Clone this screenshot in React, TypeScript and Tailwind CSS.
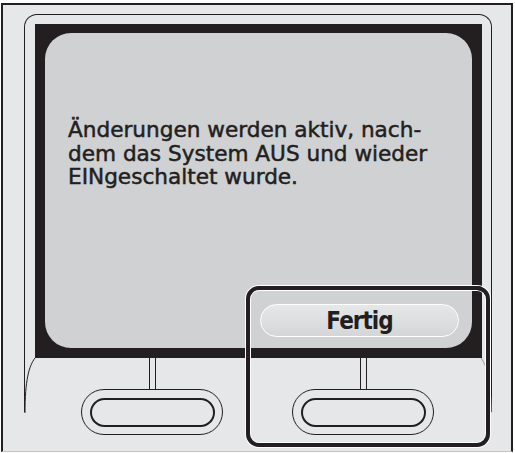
import React from "react";

const ink = "#231f20";

function HardButton() {
  return (
    <div className="flex flex-col items-center w-[142px]">
      <div className="w-[7px] h-[31px] border-x border-[#231f20] bg-[#e6e7e8]" />
      <div className="w-[142px] h-[46px] rounded-full border border-[#231f20] bg-[#e6e7e8] flex items-center justify-center">
        <div className="w-[125px] h-[29px] rounded-full border-2 border-[#231f20]" />
      </div>
    </div>
  );
}

export default function App() {
  return (
    <div
      className="relative w-[515px] h-[453px] bg-white overflow-hidden"
      style={{ fontFamily: '"DejaVu Sans", sans-serif' }}
    >
      {/* device housing */}
      <div className="mt-[3px] ml-[1px] w-[512px] h-[449px] border-x-2 border-t-2 border-b border-t-[#231f20] border-x-[#231f20] border-b-[#c4c5c6] bg-[#e6e7e8]">
        {/* bezel */}
        <div className="relative mt-[9px] ml-[21px] w-[468px] h-[398px] border-x border-t border-[#231f20] rounded-t-[13px]">
          {/* screen frame */}
          <div className="mt-[9px] ml-[10px] w-[447px] h-[334px] bg-[#231f20] pt-[9px] pb-[10px] px-[10px]">
            <div className="h-full rounded-[26px] bg-[#cfd1d3] flex flex-col">
              <p className="pt-[85px] pl-[23px] text-[21.6px] leading-[23.5px] text-[#231f20] [-webkit-text-stroke:0.5px_#231f20] whitespace-nowrap">
                Änderungen werden aktiv, nach-
                <br />
                dem das System AUS und wieder
                <br />
                EINgeschaltet wurde.
              </p>
              <button
                className="mt-auto self-end mr-[13px] mb-[11px] w-[199px] h-[33px] rounded-full border-[1.5px] border-white bg-gradient-to-b from-[#e6e7e8] to-[#d5d6d8] text-[24px] tracking-[-1px] font-bold text-[#231f20] leading-none flex items-center justify-center"
                style={{ fontFamily: '"DejaVu Sans Condensed", "DejaVu Sans", sans-serif' }}
              >
                Fertig
              </button>
            </div>
          </div>

          {/* hardware keys */}
          <div className="flex gap-[69px] ml-[56px]">
            <HardButton />
            <HardButton />
          </div>

          {/* bezel side curves */}
          <svg className="absolute left-[-1px] top-[343px]" width="14" height="56" viewBox="0 0 14 56">
            <path d="M11 0 C5 8 1 22 1 55" fill="none" stroke={ink} strokeWidth="1" />
          </svg>
          <svg className="absolute right-[-1px] top-[343px]" width="14" height="56" viewBox="0 0 14 56">
            <path d="M3 0 C9 8 13 22 13 55" fill="none" stroke="#9a9a9a" strokeWidth="1" />
          </svg>
        </div>
      </div>

      {/* highlight around softkey */}
      <div className="absolute left-[246px] top-[286px] w-[244px] h-[161px] rounded-[13px] border-4 border-[#231f20] ring-1 ring-white shadow-[inset_0_0_0_1px_#ffffff]" />
    </div>
  );
}
